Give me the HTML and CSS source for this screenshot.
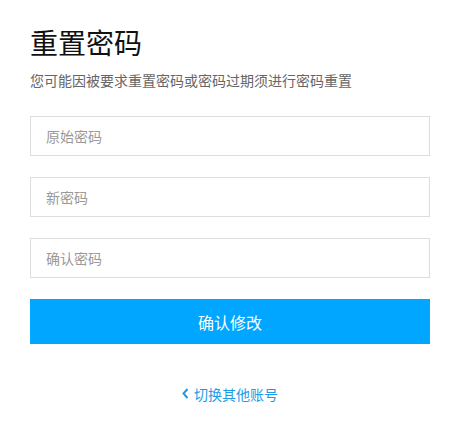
FILE: index.html
```html
<!doctype html>
<html lang="zh-CN">
<head>
    <meta charset="UTF-8">
    <meta name="viewport" content="width=device-width, initial-scale=1.0">
    <title>重置密码</title>
    <link rel="stylesheet" href="styles.css">
</head>
<body>
<div class="page">
    <h1 class="title">重置密码</h1>
    <p class="tip">您可能因被要求重置密码或密码过期须进行密码重置</p>
    <form class="form">
        <input type="password" class="field" placeholder="原始密码">
        <input type="password" class="field" placeholder="新密码">
        <input type="password" class="field" placeholder="确认密码">
        <button type="button" class="submit">确认修改</button>
    </form>
    <div class="switch">
        <a href="#" class="switch-link">
            <svg class="chev" width="7" height="11" viewBox="0 0 7 11">
                <path d="M5.5 1 L1.5 5.5 L5.5 10" fill="none" stroke="currentColor" stroke-width="2"/>
            </svg>
            切换其他账号
        </a>
    </div>
</div>
</body>
</html>
```

FILE: styles.css
```css
* {
    box-sizing: border-box;
}

body {
    margin: 0;
    background: #fff;
    font-family: "Noto Sans CJK SC", "Noto Sans", sans-serif;
}

.page {
    width: 400px;
    margin-left: 30px;
    padding-top: 22px;
}

.title {
    margin: 0;
    font-size: 28px;
    font-weight: normal;
    line-height: 40px;
    color: #111;
}

.tip {
    margin: 8px 0 0;
    font-size: 14px;
    line-height: 20px;
    color: #666;
}

.form {
    display: flex;
    flex-direction: column;
    gap: 21px;
    margin-top: 26px;
}

.field {
    height: 40px;
    padding: 0 15px;
    border: 1px solid #ddd;
    font-family: inherit;
    font-size: 14px;
    color: #333;
    outline: none;
}

.field::placeholder {
    color: #999;
}

.submit {
    height: 45px;
    border: none;
    background: #00a6ff;
    color: #fff;
    font-family: inherit;
    font-size: 16px;
    cursor: pointer;
}

.switch {
    margin-top: 36px;
    text-align: center;
}

.switch-link {
    display: inline-flex;
    align-items: center;
    gap: 5px;
    font-size: 14px;
    color: #1a9ce8;
    text-decoration: none;
}
```
